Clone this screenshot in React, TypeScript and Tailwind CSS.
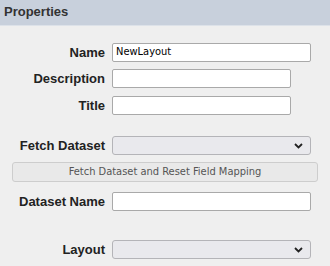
import React from "react";

const Chevron = () => (
  <svg width="9" height="6" viewBox="0 0 9 6" className="absolute right-[7px] top-[6px]">
    <path d="M1 1 L4.5 4.5 L8 1" stroke="#222" strokeWidth="1.8" fill="none" />
  </svg>
);

const Label = ({ children }: { children: React.ReactNode }) => (
  <div className="w-[105px] shrink-0 text-right pr-0 text-[13px] font-bold text-[#222] leading-none font-['Liberation_Sans',Arial,sans-serif]">
    {children}
  </div>
);

const Input = ({ w, value }: { w: string; value?: string }) => (
  <div
    className={`${w} h-[19px] ml-[7px] bg-white border border-[#a9a9a9] rounded-[2px] px-[3px] flex items-center text-[11px] text-black font-['DejaVu_Sans_Condensed','DejaVu_Sans',sans-serif]`}
  >
    {value}
  </div>
);

const Select = () => (
  <div className="relative w-[199px] h-[19px] ml-[7px] bg-[#e9e9ed] border border-[#b4b4b8] rounded-[3px]">
    <Chevron />
  </div>
);

export default function App() {
  return (
    <div className="w-[330px] h-[266px] bg-[#efefef] overflow-hidden">
      <div className="h-[26px] bg-[#c8d0dc] border-b border-[#dde2e9] flex items-center pl-[4px] pb-[1px]">
        <span className="text-[13px] font-bold text-[#333] font-['Liberation_Sans',Arial,sans-serif]">Properties</span>
      </div>
      <div className="flex items-center mt-[17px]">
        <Label>Name</Label>
        <Input w="w-[199px]" value="NewLayout" />
      </div>
      <div className="flex items-center mt-[7px]">
        <Label>Description</Label>
        <Input w="w-[179px]" />
      </div>
      <div className="flex items-center mt-[8px]">
        <Label>Title</Label>
        <Input w="w-[179px]" />
      </div>
      <div className="flex items-center mt-[21px]">
        <Label>Fetch Dataset</Label>
        <Select />
      </div>
      <div className="mt-[7px] ml-[12px] w-[306px] h-[20px] bg-[#e9e9e9] border border-[#cdcdcd] rounded-[3px] flex items-center justify-center text-[11px] text-[#555] font-['DejaVu_Sans_Condensed','DejaVu_Sans',sans-serif]">
        Fetch Dataset and Reset Field Mapping
      </div>
      <div className="flex items-center mt-[10px]">
        <Label>Dataset Name</Label>
        <Input w="w-[199px]" />
      </div>
      <div className="flex items-center mt-[29px]">
        <Label>Layout</Label>
        <Select />
      </div>
    </div>
  );
}
